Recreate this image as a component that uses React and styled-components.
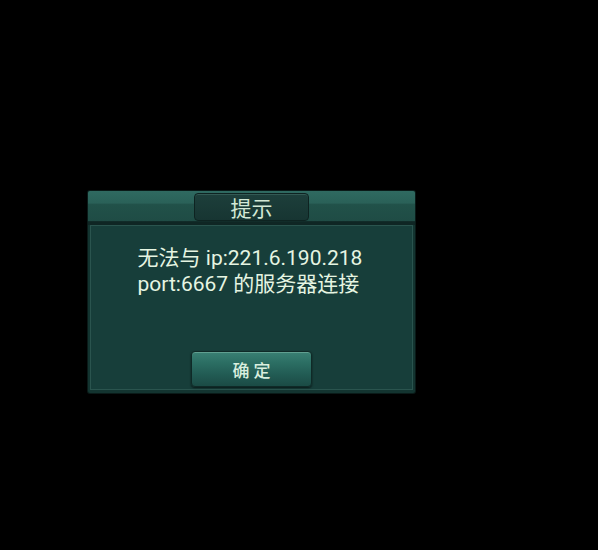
import React from "react";
import styled, { createGlobalStyle } from "styled-components";

const Global = createGlobalStyle`
  html, body { margin: 0; padding: 0; background: #000; }
  body { font-family: Roboto, "Noto Sans CJK SC", sans-serif; }
`;

const Page = styled.div`
  width: 598px;
  height: 550px;
  background: #000;
  box-sizing: border-box;
  padding: 191px 0 0 88px;
  overflow: hidden;
`;

const Dialog = styled.div`
  width: 327px;
  height: 202px;
  box-sizing: border-box;
  display: flex;
  flex-direction: column;
  background: #133430;
  border-radius: 2px;
  box-shadow: 0 0 0 1px #0a1a18;
`;

const Header = styled.div`
  height: 34px;
  flex: none;
  display: flex;
  justify-content: center;
  align-items: flex-start;
  padding-top: 2px;
  box-sizing: border-box;
  background: linear-gradient(
    to bottom,
    #2f6a61 0%,
    #2a6158 35%,
    #215149 40%,
    #1f4c45 88%,
    #0f2624 90%,
    #0f2624 100%
  );
  border-radius: 2px 2px 0 0;
`;

const Tab = styled.div`
  width: 115px;
  height: 28px;
  box-sizing: border-box;
  border-radius: 4px;
  background: linear-gradient(to bottom, #1d3f3b, #173532);
  border: 1px solid #0e2321;
  box-shadow: inset 0 1px 0 rgba(120, 170, 160, 0.25);
  display: flex;
  align-items: center;
  justify-content: center;
  color: #d3e8d6;
  font-size: 21px;
  font-family: "Noto Sans CJK SC", sans-serif;
  line-height: 1;
`;

const Body = styled.div`
  flex: 1;
  margin: 0 2px 3px 2px;
  border: 1px solid #2a544e;
  background: #173e3a;
  display: flex;
  flex-direction: column;
  align-items: center;
  padding-top: 19px;
  box-sizing: border-box;
`;

const Message = styled.div`
  color: #e6f5e2;
  font-size: 21px;
  line-height: 26px;
  text-align: left;
  margin-left: -3px;
  font-family: Roboto, "Noto Sans CJK SC", sans-serif;
`;

const Line = styled.div`
  white-space: nowrap;
`;

const Button = styled.button`
  margin-top: auto;
  margin-bottom: 2px;
  width: 121px;
  height: 36px;
  box-sizing: border-box;
  border-radius: 4px;
  border: 1px solid #0f2a27;
  background: linear-gradient(
    to bottom,
    #3a8073 0%,
    #2c6f64 30%,
    #225c54 65%,
    #1b4b45 100%
  );
  box-shadow: inset 0 1px 0 rgba(170, 220, 200, 0.35), 0 1px 2px rgba(0, 0, 0, 0.6);
  color: #d9efdf;
  font-size: 17px;
  font-weight: 500;
  letter-spacing: 4px;
  padding: 0 0 0 4px;
  font-family: "Noto Sans CJK SC", sans-serif;
  display: flex;
  align-items: center;
  justify-content: center;
`;

export default function App() {
  return (
    <>
      <Global />
      <Page>
        <Dialog>
          <Header>
            <Tab>提示</Tab>
          </Header>
          <Body>
            <Message>
              <Line>无法与 ip:221.6.190.218</Line>
              <Line>port:6667 的服务器连接</Line>
            </Message>
            <Button>确定</Button>
          </Body>
        </Dialog>
      </Page>
    </>
  );
}
